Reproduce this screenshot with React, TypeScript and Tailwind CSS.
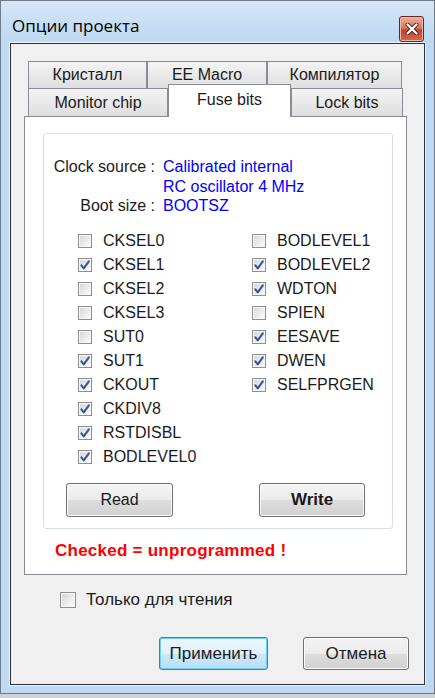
import React from 'react'

type Bit = { name: string; on: boolean }

const leftBits: Bit[] = [
  { name: 'CKSEL0', on: false },
  { name: 'CKSEL1', on: true },
  { name: 'CKSEL2', on: false },
  { name: 'CKSEL3', on: false },
  { name: 'SUT0', on: false },
  { name: 'SUT1', on: true },
  { name: 'CKOUT', on: true },
  { name: 'CKDIV8', on: true },
  { name: 'RSTDISBL', on: true },
  { name: 'BODLEVEL0', on: true }
]

const rightBits: Bit[] = [
  { name: 'BODLEVEL1', on: false },
  { name: 'BODLEVEL2', on: true },
  { name: 'WDTON', on: true },
  { name: 'SPIEN', on: false },
  { name: 'EESAVE', on: true },
  { name: 'DWEN', on: true },
  { name: 'SELFPRGEN', on: true }
]

const Check = ({ on, big = false }: { on: boolean; big?: boolean }) => (
  <span
    className={`flex shrink-0 items-center justify-center border border-[#8f8f8f] bg-[linear-gradient(135deg,#d2d4d8_0%,#eeeeee_60%,#fbfbfb_100%)] shadow-[inset_0_0_0_1px_#f6f6f6] ${
      big ? 'h-[16px] w-[16px]' : 'h-[14px] w-[14px]'
    }`}
  >
    {on && (
      <svg viewBox="0 0 10 10" className="h-[10px] w-[10px]">
        <path d="M1.4 5.3 L3.8 8.3 L8.8 1.4" stroke="#3a52a4" strokeWidth="2.1" fill="none" strokeLinecap="round" strokeLinejoin="round" />
      </svg>
    )}
  </span>
)

const tab =
  'flex items-center justify-center border border-[#898c95] text-[16px] text-[#1b1b1b] bg-[linear-gradient(180deg,#f4f4f4_0%,#e9e9e9_50%,#dedede_100%)]'

const btn =
  'flex items-center justify-center rounded-[3px] border border-[#707070] text-[#1b1b1b] bg-[linear-gradient(180deg,#f4f4f4_0%,#ececec_50%,#dedede_51%,#d0d0d0_100%)] shadow-[inset_0_0_0_1px_#fbfbfb]'

export default function App() {
  return (
    <div className="h-[698px] w-[435px] bg-[#cfd3d8] font-['Liberation_Sans',Arial,sans-serif]">
      <div className="flex h-[694px] w-[435px] flex-col border border-[#6e7b8b] bg-[#bfd9f2]">
        {/* title bar */}
        <div className="flex h-[42px] shrink-0 items-start justify-between bg-[linear-gradient(180deg,#d6e7f7_0%,#c6ddf3_60%,#bfd9f2_100%)] pl-[11px] pr-[10px]">
          <span className="mt-[15px] font-['Open_Sans','Liberation_Sans',sans-serif] text-[17px] leading-[20px] text-black">
            Опции проекта
          </span>
          <div className="mt-[15px] flex h-[26px] w-[25px] items-center justify-center rounded-[3px] border border-[#6b2418] bg-[linear-gradient(180deg,#eab0a0_0%,#d9785e_45%,#c4432a_55%,#d26a4f_100%)] shadow-[inset_0_0_0_1px_#f0b8a8]">
            <svg viewBox="0 0 14 12" className="h-[12px] w-[14px]">
              <path d="M2.5 1.5 L11.5 10.5 M11.5 1.5 L2.5 10.5" stroke="#4a1a10" strokeWidth="4" strokeLinecap="round" />
              <path d="M2.5 1.5 L11.5 10.5 M11.5 1.5 L2.5 10.5" stroke="#ffffff" strokeWidth="2.4" strokeLinecap="round" />
            </svg>
          </div>
        </div>

        {/* client area */}
        <div className="mx-[9px] flex h-[642px] flex-col border border-[#28313d] bg-[#f0f0f0] shadow-[0_0_0_1px_#eef6fd]">
          <div className="ml-[13px] mt-[17px] w-[383px]">
            <div className="flex h-[27px] pl-[4px]">
              <div className={`${tab} w-[119px] border-b-0`}>Кристалл</div>
              <div className={`${tab} w-[120px] border-b-0`}>EE Macro</div>
              <div className={`${tab} w-[135px] border-b-0`}>Компилятор</div>
            </div>
            <div className="flex h-[28px] items-end pl-[4px]">
              <div className={`${tab} h-[28px] w-[140px] border-b-0`}>Monitor chip</div>
              <div className="relative z-10 -mb-px flex h-[33px] w-[123px] items-center justify-center border border-b-0 border-[#898c95] bg-white pb-[3px] text-[16px] text-[#1b1b1b]">
                Fuse bits
              </div>
              <div className={`${tab} h-[28px] w-[112px] border-b-0`}>Lock bits</div>
            </div>

            <div className="h-[459px] border border-[#898c95] bg-white">
              <div className="ml-[18px] mt-[16px] h-[396px] w-[350px] rounded-[3px] border border-[#d5dfe5] pt-[23px]">
                <div className="grid grid-cols-[111px_auto] gap-x-[8px] text-[16px] leading-[19.5px]">
                  <span className="text-right text-[#1b1b1b]">Clock source :</span>
                  <span className="text-[#0000ff]">
                    Calibrated internal
                    <br />
                    RC oscillator 4 MHz
                  </span>
                  <span className="text-right text-[#1b1b1b]">Boot size :</span>
                  <span className="text-[#0000ff]">BOOTSZ</span>
                </div>

                <div className="mt-[13px] flex pl-[34px] text-[16px] text-[#1b1b1b]">
                  <div className="flex w-[174px] flex-col">
                    {leftBits.map((b) => (
                      <div key={b.name} className="flex h-[24px] items-center gap-[11px]">
                        <Check on={b.on} />
                        <span>{b.name}</span>
                      </div>
                    ))}
                  </div>
                  <div className="flex flex-col">
                    {rightBits.map((b) => (
                      <div key={b.name} className="flex h-[24px] items-center gap-[11px]">
                        <Check on={b.on} />
                        <span>{b.name}</span>
                      </div>
                    ))}
                  </div>
                </div>

                <div className="mt-[14px] flex pl-[22px]">
                  <div className={`${btn} h-[34px] w-[107px] text-[16px]`}>Read</div>
                  <div className={`${btn} ml-[86px] h-[34px] w-[106px] text-[17px] font-bold`}>Write</div>
                </div>
              </div>

              <div className="ml-[30px] mt-[12px] text-[17px] font-bold leading-[20px] tracking-[0.25px] text-[#ff0000]">
                Checked = unprogrammed !
              </div>
            </div>
          </div>

          <div className="ml-[49px] mt-[15px] flex h-[20px] items-center gap-[10px] text-[17px] text-[#1b1b1b]">
            <Check on={false} big />
            <span>Только для чтения</span>
          </div>

          <div className="mt-[27px] flex justify-end gap-[35px] pr-[15px] text-[17px]">
            <div className="flex h-[33px] w-[109px] items-center justify-center rounded-[3px] border border-[#3c7fb1] bg-[linear-gradient(180deg,#eef7fd_0%,#dff1fc_50%,#cbe8fb_51%,#b9def7_100%)] text-[#1b1b1b] shadow-[inset_0_0_0_1px_#6fd0f6]">
              Применить
            </div>
            <div className={`${btn} h-[33px] w-[106px]`}>Отмена</div>
          </div>
        </div>
      </div>
    </div>
  )
}
